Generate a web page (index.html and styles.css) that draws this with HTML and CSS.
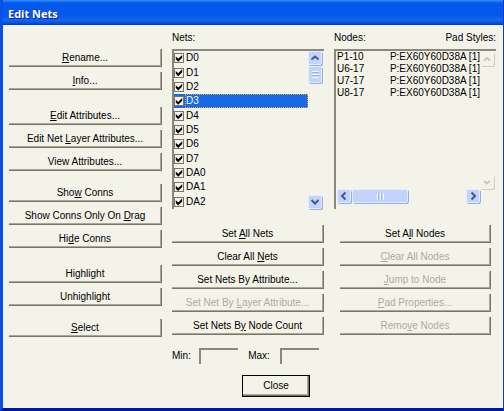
FILE: index.html
```html
<!DOCTYPE html>
<html lang="en">
<head>
    <meta charset="UTF-8">
    <meta name="viewport" content="width=device-width, initial-scale=1.0">
    <title>Edit Nets</title>
    <link rel="stylesheet" href="styles.css">
</head>
<body>
    <div class="window">
        <header class="titlebar">
            <h1>Edit Nets</h1>
        </header>
        <main class="content">
            <div class="commands">
                <div class="group">
                    <button><u>R</u>ename...</button>
                    <button><u>I</u>nfo...</button>
                </div>
                <div class="group wide">
                    <button><u>E</u>dit Attributes...</button>
                    <button>Edit Net <u>L</u>ayer Attributes...</button>
                    <button>View Attributes...</button>
                </div>
                <div class="group">
                    <button>Sho<u>w</u> Conns</button>
                    <button>Show Conns Only On <u>D</u>rag</button>
                    <button>Hi<u>d</u>e Conns</button>
                </div>
                <div class="group wide">
                    <button>Highlight</button>
                    <button>Unhighlight</button>
                </div>
                <div class="group">
                    <button><u>S</u>elect</button>
                </div>
            </div>

            <div class="column">
                <div class="labels"><span>Nets:</span></div>
                <div class="listbox">
                    <div class="nets">
                        <label class="net"><input type="checkbox" checked><span>D0</span></label>
                        <label class="net"><input type="checkbox" checked><span>D1</span></label>
                        <label class="net"><input type="checkbox" checked><span>D2</span></label>
                        <label class="net selected"><input type="checkbox" checked><span>D3</span></label>
                        <label class="net"><input type="checkbox" checked><span>D4</span></label>
                        <label class="net"><input type="checkbox" checked><span>D5</span></label>
                        <label class="net"><input type="checkbox" checked><span>D6</span></label>
                        <label class="net"><input type="checkbox" checked><span>D7</span></label>
                        <label class="net"><input type="checkbox" checked><span>DA0</span></label>
                        <label class="net"><input type="checkbox" checked><span>DA1</span></label>
                        <label class="net"><input type="checkbox" checked><span>DA2</span></label>
                    </div>
                    <div class="scroll_v">
                        <button class="arrow" aria-label="Scroll up"><svg width="10" height="10" viewBox="0 0 10 10"><path d="M1.5 6.5L5 3.5L8.5 6.5"/></svg></button>
                        <div class="thumb"></div>
                        <button class="arrow last" aria-label="Scroll down"><svg width="10" height="10" viewBox="0 0 10 10"><path d="M1.5 3L5 6.5L8.5 3"/></svg></button>
                    </div>
                </div>
                <div class="group actions">
                    <button>Set <u>A</u>ll Nets</button>
                    <button>Clear All <u>N</u>ets</button>
                    <button>Set Nets By Attribute...</button>
                    <button disabled>Set Net By <u>L</u>ayer Attribute...</button>
                    <button>Set Nets B<u>y</u> Node Count</button>
                </div>
                <div class="range">
                    <label for="min">Min:</label>
                    <input type="text" id="min">
                    <label for="max">Max:</label>
                    <input type="text" id="max">
                </div>
            </div>

            <div class="column">
                <div class="labels"><span>Nodes:</span><span>Pad Styles:</span></div>
                <div class="listbox">
                    <div class="pane">
                        <table class="nodes">
                            <tr><td>P1-10</td><td>P:EX60Y60D38A [1]</td></tr>
                            <tr><td>U6-17</td><td>P:EX60Y60D38A [1]</td></tr>
                            <tr><td>U7-17</td><td>P:EX60Y60D38A [1]</td></tr>
                            <tr><td>U8-17</td><td>P:EX60Y60D38A [1]</td></tr>
                        </table>
                        <div class="scroll_h">
                            <button class="arrow" aria-label="Scroll left"><svg width="10" height="10" viewBox="0 0 10 10"><path d="M6.5 1.5L3 5L6.5 8.5"/></svg></button>
                            <div class="thumb"></div>
                            <button class="arrow last" aria-label="Scroll right"><svg width="10" height="10" viewBox="0 0 10 10"><path d="M3.5 1.5L7 5L3.5 8.5"/></svg></button>
                        </div>
                    </div>
                    <div class="scroll_v off">
                        <button class="arrow" disabled aria-label="Scroll up"><svg width="10" height="10" viewBox="0 0 10 10"><path d="M2 6.5L5 4L8 6.5"/></svg></button>
                        <button class="arrow last" disabled aria-label="Scroll down"><svg width="10" height="10" viewBox="0 0 10 10"><path d="M2 4L5 6.5L8 4"/></svg></button>
                    </div>
                </div>
                <div class="group actions inset">
                    <button>Set A<u>l</u>l Nodes</button>
                    <button disabled><u>C</u>lear All Nodes</button>
                    <button disabled><u>J</u>ump to Node</button>
                    <button disabled><u>P</u>ad Properties...</button>
                    <button disabled>Remo<u>v</u>e Nodes</button>
                </div>
            </div>
        </main>
        <footer class="footer">
            <button class="close">Close</button>
        </footer>
    </div>
</body>
</html>
```

FILE: styles.css
```css
* {
    box-sizing: border-box;
}
body {
    margin: 0;
    font-family: "Liberation Sans", Arial, sans-serif;
    font-size: 10px;
    line-height: 12px;
    color: #000;
}
button, input {
    font: inherit;
    color: inherit;
}
.window {
    display: flex;
    flex-direction: column;
    min-height: 100vh;
    background-color: #f4f3ea;
    border: 0 solid #0a4fe8;
    border-left-width: 3px;
    border-right: 1px solid #0a3cc4;
    border-bottom: 3px solid #0018a0;
}
.titlebar {
    height: 25px;
    padding: 6px 5px;
    background: linear-gradient(#3090ff 0, #0458ec 3px, #0458ec 16px, #1468ee 20px, #0850e0 23px, #0038c0 25px);
    color: #fff;
}
.titlebar h1 {
    margin: 0;
    font-size: 11px;
    line-height: 15px;
    font-family: "Open Sans", sans-serif;
    font-weight: bold;
    text-shadow: 1px 1px #0a1c90;
}
.content {
    display: grid;
    grid-template-columns: 153fr 152fr 162fr;
    column-gap: 10px;
    padding: 7px 7px 0 6px;
}
.commands {
    padding-top: 17px;
}
.group {
    display: flex;
    flex-direction: column;
    gap: 5px;
    margin-top: 13px;
}
.group.wide {
    margin-top: 17px;
}
.group:first-child {
    margin-top: 0;
}
.group button {
    height: 18px;
    padding: 0;
    background-color: #f4f3ea;
    border: 0;
    border-right: 1px solid #7b7468;
    border-bottom: 1px solid #7b7468;
    box-shadow: inset -1px -1px #aaa799;
    white-space: nowrap;
}
button:disabled {
    color: #aeab9e;
}
.labels {
    display: flex;
    justify-content: space-between;
    height: 17px;
}
.listbox {
    display: flex;
    height: 160px;
    border-top: 2px solid #8c877b;
    border-left: 2px solid #8c877b;
}
.nets {
    flex: 1;
    display: grid;
}
.net {
    display: flex;
    align-items: center;
}
.net span {
    flex: 1;
    align-self: stretch;
    display: flex;
    align-items: center;
    padding-left: 1px;
    margin-left: 1px;
}
.net.selected {
    background-color: #166ae8;
    color: #fff;
}
.net.selected span {
    outline: 1px dotted #f0a030;
    outline-offset: -1px;
}
.net input {
    appearance: none;
    margin: 0;
    width: 10px;
    height: 10px;
    background-color: #f4f3ea;
    border: 1px solid #7b7468;
}
.net input:checked::before {
    content: "";
    display: block;
    width: 8px;
    height: 8px;
    background-color: #000;
    clip-path: polygon(10% 30%, 40% 58%, 90% 10%, 90% 45%, 40% 95%, 10% 65%);
}
.net.selected input {
    color: #000;
}
.scroll_v {
    display: flex;
    flex-direction: column;
    gap: 1px;
    width: 16px;
}
.scroll_h {
    display: flex;
    gap: 1px;
    height: 15px;
}
.arrow, .thumb {
    display: flex;
    align-items: center;
    justify-content: center;
    flex: none;
    width: 14px;
    height: 14px;
    padding: 0;
    background-color: #c2d3fc;
    border: 1px solid #e4ecfc;
    border-radius: 2px;
    box-shadow: 1px 1px #94b0e0;
}
.arrow svg {
    fill: none;
    stroke: #435a87;
    stroke-width: 2;
}
.scroll_v .last {
    margin-top: auto;
}
.scroll_h .last {
    margin-left: auto;
}
.scroll_v .thumb {
    height: 17px;
}
.scroll_h .thumb {
    width: 56px;
}
.thumb::before {
    content: "";
    width: 7px;
    height: 7px;
    background: repeating-linear-gradient(#f4f8ff 0 1px, #9cb4ea 1px 2px, #c2d3fc 2px 3px);
}
.scroll_h .thumb::before {
    background: repeating-linear-gradient(90deg, #f4f8ff 0 1px, #9cb4ea 1px 2px, #c2d3fc 2px 3px);
}
.off {
    padding: 1px 0 20px;
}
.off .arrow {
    background-color: #f4f3ea;
    border-color: #f4f3ea;
    box-shadow: 1px 1px #cfcdc4;
}
.off .arrow svg {
    stroke: #c8c6bc;
}
.pane {
    flex: 1;
    display: flex;
    flex-direction: column;
    justify-content: space-between;
    padding: 0 0 5px 1px;
}
.nodes {
    width: 100%;
    border-collapse: collapse;
    white-space: nowrap;
}
.nodes td {
    padding: 0;
}
.nodes td:first-child {
    width: 54px;
}
.actions {
    margin-top: 16px;
}
.inset {
    margin-left: 6px;
    margin-right: 5px;
}
.range {
    display: grid;
    grid-template-columns: 27px 39px 42px 39px;
    align-items: center;
    margin-top: 13px;
}
.range label[for="max"] {
    text-align: center;
}
.range input {
    width: 100%;
    height: 16px;
    padding: 0 2px;
    background-color: #f4f3ea;
    border: 0;
    border-top: 2px solid #8c877b;
    border-left: 2px solid #8c877b;
}
.footer {
    display: flex;
    justify-content: center;
    padding: 11px 0 10px 46px;
}
.close {
    width: 68px;
    height: 22px;
    padding: 0;
    background-color: #f4f3ea;
    border: 1px solid #000;
    box-shadow: inset -1px -1px #7b7468, inset -2px -2px #aaa799;
}
```
